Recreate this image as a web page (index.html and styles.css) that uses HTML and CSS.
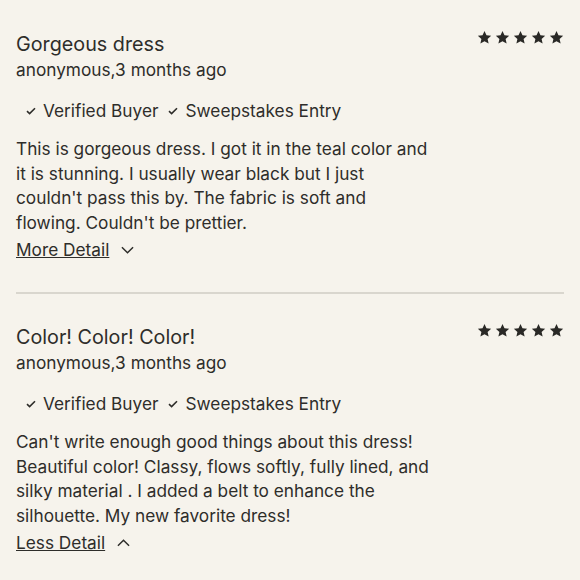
FILE: index.html
```html
<!DOCTYPE html>
<html lang="en">
<head>
<meta charset="utf-8">
<title>Reviews</title>
<link rel="stylesheet" href="styles.css">
</head>
<body>
<div class="reviews">
  <article class="review">
    <div class="head">
      <div class="who">
        <h3 class="title">Gorgeous dress</h3>
        <div class="meta">anonymous,3 months ago</div>
      </div>
      <div class="stars" aria-label="5 stars">
        <svg viewBox="0 0 16 16"><path d="M8 1l2.1 4.6 5 .5-3.8 3.4 1.1 4.9L8 11.9l-4.4 2.5 1.1-4.9L.9 6.1l5-.5z"/></svg>
        <svg viewBox="0 0 16 16"><path d="M8 1l2.1 4.6 5 .5-3.8 3.4 1.1 4.9L8 11.9l-4.4 2.5 1.1-4.9L.9 6.1l5-.5z"/></svg>
        <svg viewBox="0 0 16 16"><path d="M8 1l2.1 4.6 5 .5-3.8 3.4 1.1 4.9L8 11.9l-4.4 2.5 1.1-4.9L.9 6.1l5-.5z"/></svg>
        <svg viewBox="0 0 16 16"><path d="M8 1l2.1 4.6 5 .5-3.8 3.4 1.1 4.9L8 11.9l-4.4 2.5 1.1-4.9L.9 6.1l5-.5z"/></svg>
        <svg viewBox="0 0 16 16"><path d="M8 1l2.1 4.6 5 .5-3.8 3.4 1.1 4.9L8 11.9l-4.4 2.5 1.1-4.9L.9 6.1l5-.5z"/></svg>
      </div>
    </div>
    <ul class="badges">
      <li><svg class="check" viewBox="0 0 10 8"><path d="M1 4.2l2.6 2.4L9 1.2"/></svg>Verified Buyer</li>
      <li><svg class="check" viewBox="0 0 10 8"><path d="M1 4.2l2.6 2.4L9 1.2"/></svg>Sweepstakes Entry</li>
    </ul>
    <p class="body">This is gorgeous dress. I got it in the teal color and it is stunning. I usually wear black but I just couldn't pass this by. The fabric is soft and flowing. Couldn't be prettier.</p>
    <a class="toggle" href="#">More Detail<svg class="chev" viewBox="0 0 14 8"><path d="M1 1l6 6 6-6"/></svg></a>
  </article>
  <article class="review">
    <div class="head">
      <div class="who">
        <h3 class="title">Color! Color! Color!</h3>
        <div class="meta">anonymous,3 months ago</div>
      </div>
      <div class="stars" aria-label="5 stars">
        <svg viewBox="0 0 16 16"><path d="M8 1l2.1 4.6 5 .5-3.8 3.4 1.1 4.9L8 11.9l-4.4 2.5 1.1-4.9L.9 6.1l5-.5z"/></svg>
        <svg viewBox="0 0 16 16"><path d="M8 1l2.1 4.6 5 .5-3.8 3.4 1.1 4.9L8 11.9l-4.4 2.5 1.1-4.9L.9 6.1l5-.5z"/></svg>
        <svg viewBox="0 0 16 16"><path d="M8 1l2.1 4.6 5 .5-3.8 3.4 1.1 4.9L8 11.9l-4.4 2.5 1.1-4.9L.9 6.1l5-.5z"/></svg>
        <svg viewBox="0 0 16 16"><path d="M8 1l2.1 4.6 5 .5-3.8 3.4 1.1 4.9L8 11.9l-4.4 2.5 1.1-4.9L.9 6.1l5-.5z"/></svg>
        <svg viewBox="0 0 16 16"><path d="M8 1l2.1 4.6 5 .5-3.8 3.4 1.1 4.9L8 11.9l-4.4 2.5 1.1-4.9L.9 6.1l5-.5z"/></svg>
      </div>
    </div>
    <ul class="badges">
      <li><svg class="check" viewBox="0 0 10 8"><path d="M1 4.2l2.6 2.4L9 1.2"/></svg>Verified Buyer</li>
      <li><svg class="check" viewBox="0 0 10 8"><path d="M1 4.2l2.6 2.4L9 1.2"/></svg>Sweepstakes Entry</li>
    </ul>
    <p class="body">Can't write enough good things about this dress! Beautiful color! Classy, flows softly, fully lined, and silky material . I added a belt to enhance the silhouette. My new favorite dress!</p>
    <a class="toggle" href="#">Less Detail<svg class="chev" viewBox="0 0 14 8"><path d="M1 7l6-6 6 6"/></svg></a>
  </article>
</div>
</body>
</html>
```
FILE: styles.css
```css
* { box-sizing: border-box; }
html, body { margin: 0; }
body {
  background: #f6f3ec;
  color: #2e2d2a;
  font-family: "Inter", "Lato", sans-serif;
}
.reviews {
  padding: 0 16px;
}
.review {
  padding: 30px 0 29px;
  border-bottom: 2px solid #d9d6ce;
}
.review + .review { padding-top: 29px; }
.review:last-child { border-bottom: none; }
.head {
  display: flex;
  justify-content: space-between;
  align-items: flex-start;
}
.title {
  margin: 0;
  font-size: 19.75px;
  font-weight: 400;
  line-height: 28px;
}
.meta {
  font-size: 17.25px;
  line-height: 24px;
}
.stars {
  display: flex;
  gap: 3px;
}
.stars svg {
  width: 15px;
  height: 15px;
  fill: #2a2926;
}
.badges {
  list-style: none;
  margin: 16px 0 0;
  padding: 0 0 0 10px;
  display: flex;
  gap: 10px;
  font-size: 17.25px;
  line-height: 26px;
}
.badges li {
  display: flex;
  align-items: center;
  gap: 7px;
}
.check {
  width: 10px;
  height: 8px;
  fill: none;
  stroke: #2e2d2a;
  stroke-width: 1.6;
}
.body {
  margin: 13px 0 0;
  max-width: 414px;
  font-size: 17.25px;
  line-height: 24.5px;
}
.toggle {
  display: inline-flex;
  align-items: center;
  gap: 12px;
  margin-top: 2px;
  color: #2e2d2a;
  font-size: 17.25px;
  line-height: 26px;
}
.chev {
  width: 13px;
  height: 8px;
  fill: none;
  stroke: #2e2d2a;
  stroke-width: 1.6;
}
```
